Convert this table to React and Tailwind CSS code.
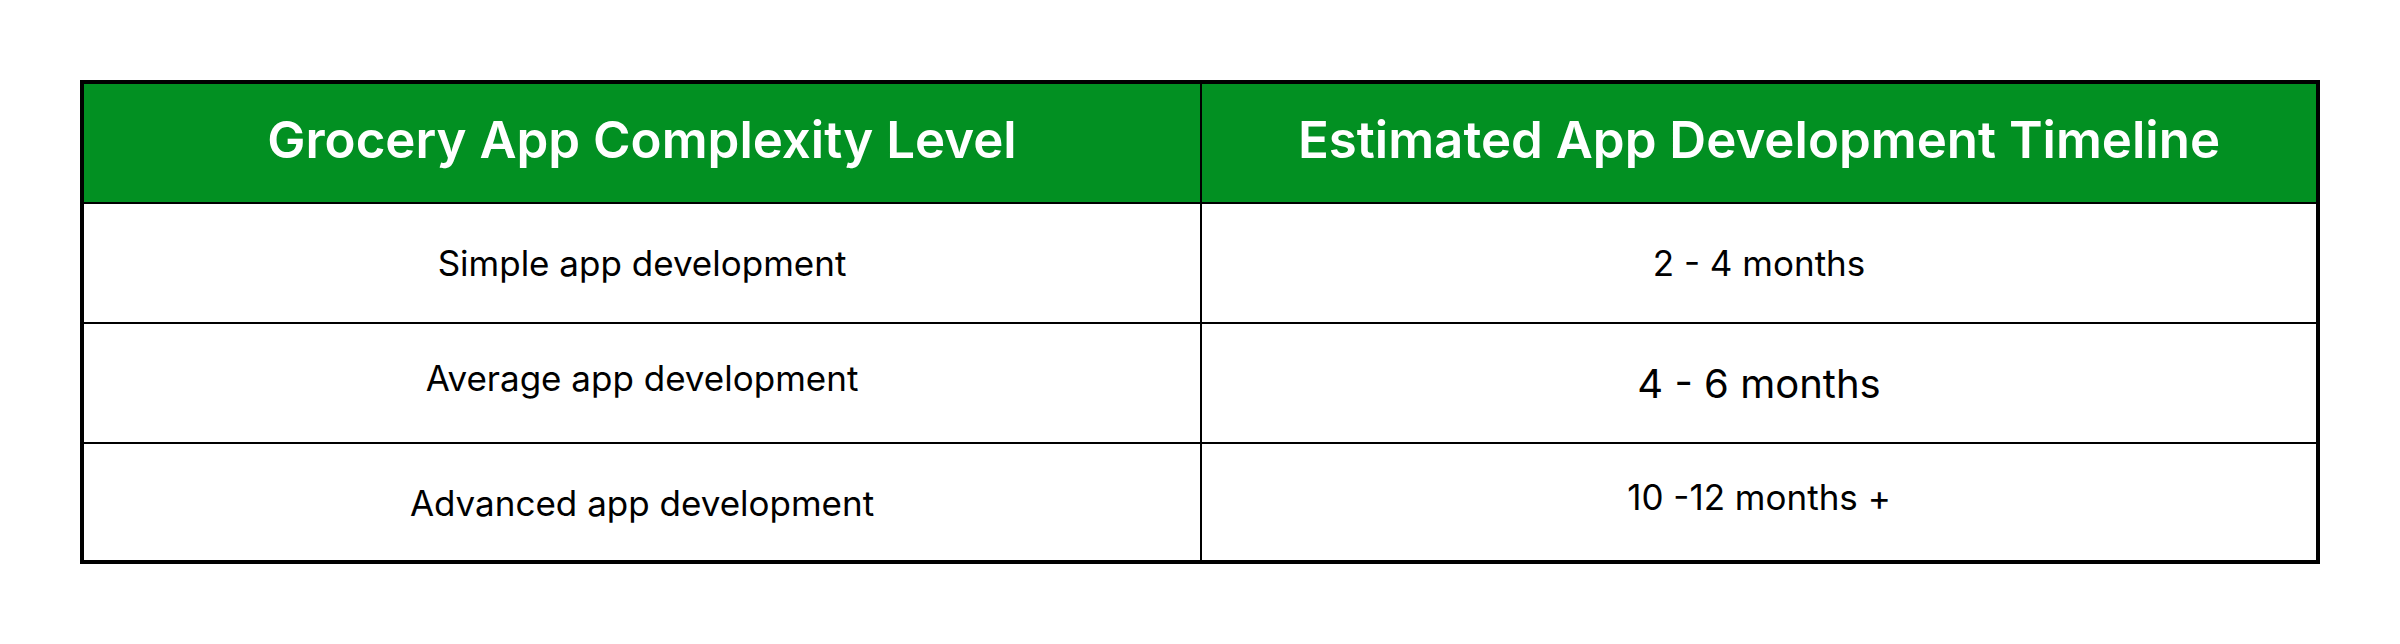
const rows = [
  { left: "Simple app development", right: "2 - 4 months", leftCls: "", rightCls: "text-[35px]" },
  { left: "Average app development", right: "4 - 6 months", leftCls: "pb-[10px]", rightCls: "text-[40px] pt-[2px]" },
  { left: "Advanced app development", right: "10 -12 months +", leftCls: "pt-[3px]", rightCls: "text-[35px] pb-[10px]" },
];

export default function App() {
  return (
    <div className="w-[2400px] h-[644px] bg-white p-[80px] font-['Inter','Liberation_Sans',sans-serif] text-black">
      <div className="w-[2240px] border-4 border-black">
        <div className="grid grid-cols-[1118px_1114px] h-[120px] bg-[#029022] border-b-2 border-black">
          <div className="flex items-center justify-center border-r-2 border-black text-white text-[51px] font-semibold pb-[6px]">
            Grocery App Complexity Level
          </div>
          <div className="flex items-center justify-center text-white text-[51px] font-semibold pb-[6px]">
            Estimated App Development Timeline
          </div>
        </div>
        {rows.map((r, i) => (
          <div
            key={r.left}
            className={`grid grid-cols-[1118px_1114px] ${i < rows.length - 1 ? "h-[120px] border-b-2 border-black" : "h-[116px]"}`}
          >
            <div className={`flex items-center justify-center border-r-2 border-black text-[35px] ${r.leftCls}`}>
              {r.left}
            </div>
            <div className={`flex items-center justify-center ${r.rightCls}`}>{r.right}</div>
          </div>
        ))}
      </div>
    </div>
  );
}
